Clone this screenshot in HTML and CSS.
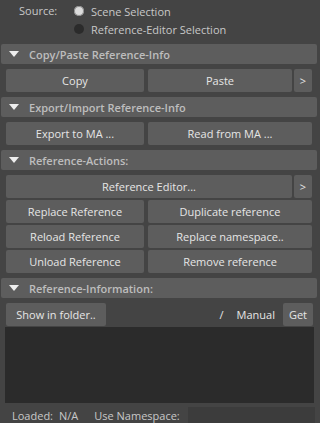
FILE: index.html
```html
<!DOCTYPE html>
<html lang="en">
<head>
    <meta charset="UTF-8">
    <meta name="viewport" content="width=device-width, initial-scale=1.0">
    <title>Reference Tools</title>
    <link rel="stylesheet" href="styles.css">
</head>
<body>
    <div class="panel">
        <div class="source">
            <span class="source-label">Source:</span>
            <div class="radio-list">
                <label class="radio"><span class="dot on"></span>Scene Selection</label>
                <label class="radio"><span class="dot"></span>Reference-Editor Selection</label>
            </div>
        </div>

        <div class="frame">
            <div class="frame-head"><span class="arrow"></span>Copy/Paste Reference-Info</div>
            <div class="frame-body">
                <div class="row">
                    <button class="btn w-left">Copy</button>
                    <button class="btn w-mid">Paste</button>
                    <button class="btn w-more">&gt;</button>
                </div>
            </div>
        </div>

        <div class="frame">
            <div class="frame-head"><span class="arrow"></span>Export/Import Reference-Info</div>
            <div class="frame-body">
                <div class="row">
                    <button class="btn w-left">Export to MA ...</button>
                    <button class="btn w-right">Read from MA ...</button>
                </div>
            </div>
        </div>

        <div class="frame">
            <div class="frame-head"><span class="arrow"></span>Reference-Actions:</div>
            <div class="frame-body">
                <div class="row">
                    <button class="btn w-wide">Reference Editor...</button>
                    <button class="btn w-more">&gt;</button>
                </div>
                <div class="row">
                    <button class="btn w-left">Replace Reference</button>
                    <button class="btn w-right">Duplicate reference</button>
                </div>
                <div class="row">
                    <button class="btn w-left">Reload Reference</button>
                    <button class="btn w-right">Replace namespace..</button>
                </div>
                <div class="row">
                    <button class="btn w-left">Unload Reference</button>
                    <button class="btn w-right">Remove reference</button>
                </div>
            </div>
        </div>

        <div class="frame">
            <div class="frame-head"><span class="arrow"></span>Reference-Information:</div>
            <div class="info-body">
                <div class="info-bar">
                    <button class="btn w-folder">Show in folder..</button>
                    <span class="slash">/</span>
                    <span class="manual">Manual</span>
                    <button class="btn w-get">Get</button>
                </div>
                <div class="info-text"></div>
            </div>
        </div>

        <div class="status">
            <span class="status-key">Loaded:</span>
            <span class="status-val">N/A</span>
            <span class="status-ns">Use Namespace:</span>
            <input class="ns-field" type="text">
        </div>
    </div>
</body>
</html>
```

FILE: styles.css
```css
* {
    margin: 0;
    padding: 0;
    box-sizing: border-box;
}

body {
    background: #444444;
    font-family: 'Open Sans', 'DejaVu Sans', sans-serif;
    font-size: 11px;
    color: #dddddd;
    width: 320px;
    height: 423px;
    overflow: hidden;
}

.panel {
    padding: 1px 3px 0 1px;
}

.source {
    display: flex;
    height: 43px;
    padding: 1px 0 0 18px;
}

.source-label {
    color: #c8c8c8;
    width: 55px;
    line-height: 18px;
}

.radio-list {
    display: flex;
    flex-direction: column;
}

.radio {
    display: flex;
    align-items: center;
    height: 18px;
    color: #c8c8c8;
}

.dot {
    width: 10px;
    height: 10px;
    border-radius: 50%;
    background: #2b2b2b;
    margin-right: 7px;
}

.dot.on {
    background: #dcdcdc;
    box-shadow: inset 0 0 0 1px #8a8a8a;
}

.frame-head {
    display: flex;
    align-items: center;
    height: 20px;
    background: #5d5d5d;
    border-radius: 2px;
    color: #bdbdbd;
    font-weight: 600;
}

.arrow {
    width: 0;
    height: 0;
    border-left: 5px solid transparent;
    border-right: 5px solid transparent;
    border-top: 6px solid #eeeeee;
    margin: 0 10px 0 8px;
}

.frame-body {
    display: flex;
    flex-direction: column;
    gap: 2px;
    padding: 5px 4px 5px 5px;
}

.row {
    display: flex;
}

.btn {
    height: 23px;
    background: #5d5d5d;
    border: none;
    border-radius: 2px;
    color: #e6e6e6;
    font-family: inherit;
    font-size: 11px;
    white-space: nowrap;
}

.w-left {
    width: 138px;
    margin-right: 4px;
}

.w-mid {
    width: 144px;
    margin-right: 2px;
}

.w-right {
    width: 164px;
}

.w-wide {
    width: 286px;
    margin-right: 2px;
}

.w-more {
    width: 18px;
}

.info-body {
    padding: 5px 3px 0 4px;
}

.info-bar {
    display: flex;
    align-items: center;
    padding-left: 1px;
    padding-right: 1px;
}

.w-folder {
    width: 100px;
}

.slash {
    margin-left: auto;
    margin-right: 13px;
    color: #e6e6e6;
}

.manual {
    margin-right: 8px;
    color: #e6e6e6;
}

.w-get {
    width: 30px;
}

.info-text {
    height: 76px;
    margin-top: 1px;
    background: #2b2b2b;
}

.status {
    display: flex;
    align-items: center;
    height: 20px;
    margin-top: 2px;
    padding-left: 11px;
    color: #c8c8c8;
    white-space: nowrap;
}

.status-key {
    margin-right: 6px;
}

.status-val {
    margin-right: 16px;
}

.status-ns {
    margin-right: 8px;
}

.ns-field {
    flex: none;
    width: 127px;
    height: 18px;
    background: #3c3c3c;
    border: none;
    margin-left: auto;
    margin-right: 6px;
    align-self: flex-end;
}
```
